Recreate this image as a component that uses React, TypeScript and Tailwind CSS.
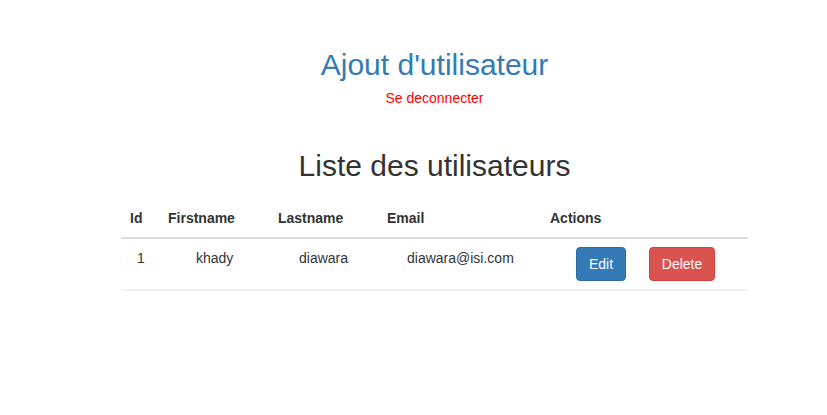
export default function App() {
  const users = [{ id: 1, firstname: "khady", lastname: "diawara", email: "diawara@isi.com" }];

  return (
    <div className="min-h-[415px] bg-white pl-[42px] text-[14px] leading-[20px] text-[#333] font-['Liberation_Sans',Arial,sans-serif]">
      <div className="flex flex-col items-center pt-[45px]">
        <h1 className="text-[30px] leading-[40px] text-[#337ab7]">Ajout d'utilisateur</h1>
        <a href="#" className="mt-[3px] text-[14px] leading-[20px] text-[#ff0000]">
          Se deconnecter
        </a>
        <h2 className="mt-[40px] text-[30px] leading-[36px] text-[#333]">Liste des utilisateurs</h2>
      </div>

      <div className="mx-auto mt-[24px] w-[627px] rounded-b-[4px] shadow-[0_1px_2px_rgba(0,0,0,0.06)]">
        <table className="w-full border-collapse">
          <thead>
            <tr className="border-b-2 border-[#ddd] text-left font-bold">
              <th className="w-[39px] pl-[9px] pb-[9px] pt-0">Id</th>
              <th className="w-[110px] pl-[8px] pb-[9px]">Firstname</th>
              <th className="w-[109px] pl-[8px] pb-[9px]">Lastname</th>
              <th className="w-[163px] pl-[8px] pb-[9px]">Email</th>
              <th className="pl-[8px] pb-[9px]">Actions</th>
            </tr>
          </thead>
          <tbody>
            {users.map((u) => (
              <tr key={u.id} className="border-b border-[#f0f0f0] align-top">
                <td className="pl-[16px] pt-[9px] pb-[9px]">{u.id}</td>
                <td className="pl-[36px] pt-[9px]">{u.firstname}</td>
                <td className="pl-[29px] pt-[9px]">{u.lastname}</td>
                <td className="pl-[28px] pt-[9px]">{u.email}</td>
                <td className="pl-[34px] pt-[8px] pb-[8px]">
                  <div className="flex gap-[23px]">
                    <button className="h-[34px] w-[50px] rounded-[4px] border border-[#2e6da4] bg-[#337ab7] text-white">
                      Edit
                    </button>
                    <button className="h-[34px] w-[66px] rounded-[4px] border border-[#d43f3a] bg-[#d9534f] text-white">
                      Delete
                    </button>
                  </div>
                </td>
              </tr>
            ))}
          </tbody>
        </table>
      </div>
    </div>
  );
}
